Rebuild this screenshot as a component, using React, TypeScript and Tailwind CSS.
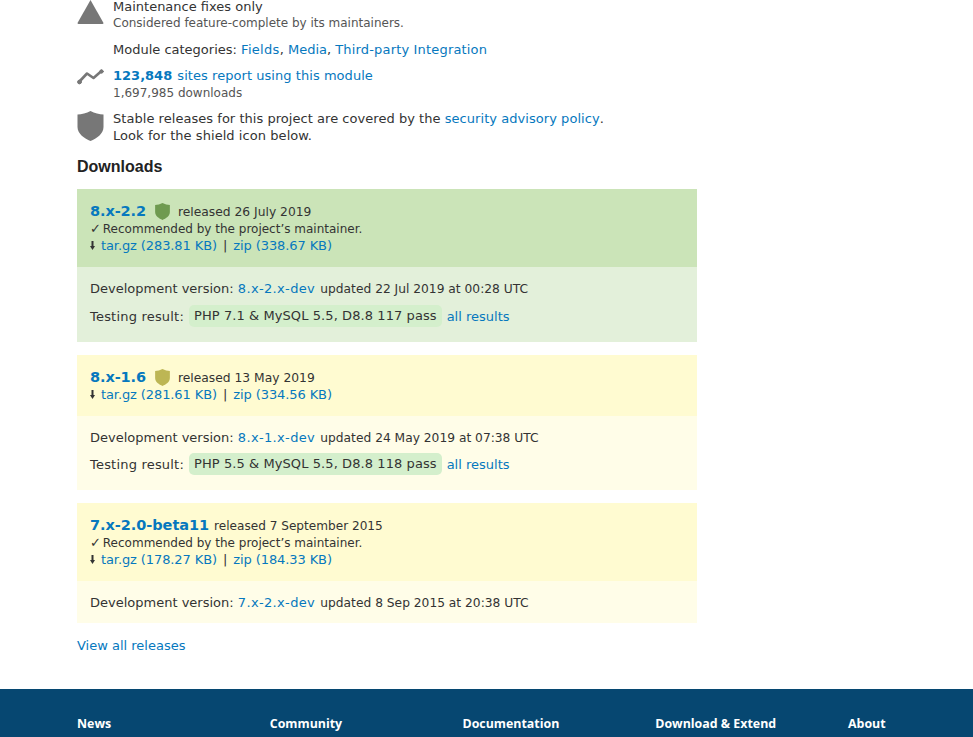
function Shield({ color, className }: { color: string; className: string }) {
  return (
    <svg viewBox="0 0 26 30" className={className} fill={color}>
      <path d="M13 0 C17 2 22 3.5 26 3.5 V16 C26 23 19 27.5 13 30 C7 27.5 0 23 0 16 V3.5 C4 3.5 9 2 13 0 Z" />
    </svg>
  );
}

function Links({ tar, zip }: { tar: string; zip: string }) {
  return (
    <div className="flex items-center tracking-[-0.1px]">
      <svg viewBox="0 0 5 9" className="w-[5px] h-[9px] mr-[6px] shrink-0" fill="#333">
        <path d="M1.5 0 H3.5 V5 H5 L2.5 9 L0 5 H1.5 Z" />
      </svg>
      <a className="text-[#0678be]">tar.gz ({tar})</a>
      <span className="whitespace-pre mx-[2px]"> | </span>
      <a className="text-[#0678be]">zip ({zip})</a>
    </div>
  );
}

function Recommended() {
  return (
    <div className="text-[12px] leading-[18px] h-[17px]">
      <span className="inline-block w-[9px] text-[13px]">✓</span> Recommended by the project’s maintainer.
    </div>
  );
}

function Title({ name, className }: { name: string; className: string }) {
  return <a className={"font-['DejaVu_Sans',sans-serif] font-bold text-[14.5px] text-[#0678be] " + className}>{name}</a>;
}

function DevVersion({ link, updated }: { link: string; updated: string }) {
  return (
    <div>
      Development version: <a className="text-[#0678be] tracking-[0.35px]">{link}</a>{' '}
      <span className="ml-[1px] text-[12.25px]">{updated}</span>
    </div>
  );
}

function Testing({ env, pass, className }: { env: string; pass: string; className: string }) {
  return (
    <div className={"flex items-center h-[24px] " + className}>
      <span className="tracking-[0.2px]">Testing result:</span>
      <span className="ml-[5px] rounded-[5px] bg-[#d4efcc] px-[5px] h-[22px] leading-[22px] tracking-[0.08px]">{env} {pass} pass</span>
      <a className="ml-[5px] text-[#0678be]">all results</a>
    </div>
  );
}

export default function App() {
  return (
    <div className="h-[737px] overflow-hidden bg-white text-[13px] leading-[17px] text-[#333] font-['DejaVu_Sans',sans-serif]">
      <div className="pl-[77px]">
        <div className="w-[620px]">
          <div className="flex -mt-[2px] h-[33px]">
            <svg viewBox="0 0 26 24" className="w-[27px] h-[24px] mt-[2px] shrink-0" fill="#777">
              <path d="M13 0 L26 23 Q26 24 25 24 H1 Q0 24 0 23 Z" />
            </svg>
            <div className="ml-[9px]">
              <div>Maintenance fixes only</div>
              <div className="text-[12px] text-[#555]">Considered feature-complete by its maintainers.</div>
            </div>
          </div>
          <div className="ml-[36px] mt-[10px]">
            Module categories: <a className="text-[#0678be] tracking-[0.3px]">Fields</a>, <a className="text-[#0678be]">Media</a>, <a className="text-[#0678be] tracking-[0.17px]">Third-party Integration</a>
          </div>
          <div className="flex mt-[9px]">
            <svg viewBox="0 0 27 16" className="w-[27px] h-[16px] mt-[2px] shrink-0" fill="#777" stroke="#777" strokeLinecap="round" strokeLinejoin="round">
              <path d="M2 13 L10 4.5 L16.5 9 L24.5 2" fill="none" strokeWidth="2.6" />
              <circle cx="2.5" cy="13" r="1.9" />
              <circle cx="24.5" cy="2.5" r="1.7" />
            </svg>
            <div className="ml-[9px]">
              <div className="h-[18px] text-[#0678be]"><b>123,848</b> <span className="tracking-[0.05px] ml-[1px]">sites report using this module</span></div>
              <div className="text-[12px] text-[#555]">1,697,985 downloads</div>
            </div>
          </div>
          <div className="flex mt-[8px]">
            <Shield color="#777" className="w-[27px] h-[30px] mt-[1px] shrink-0" />
            <div className="ml-[9px]">
              <div className="tracking-[0.04px]">Stable releases for this project are covered by the <a className="text-[#0678be] tracking-[0.05px]">security advisory policy</a>.</div>
              <div className="tracking-[0.06px]">Look for the shield icon below.</div>
            </div>
          </div>
          <h2 className="mt-[13px] font-['Liberation_Sans',sans-serif] font-bold text-[16px] leading-[20px] text-[#222]">Downloads</h2>

          <div className="mt-[12px]">
            <div className="bg-[#cbe4b8] px-[13px] pt-[13px] pb-[13px]">
              <div className="flex items-center h-[18px]">
                <Title name="8.x-2.2" className="tracking-[-0.1px]" />
                <Shield color="#6f9a50" className="w-[15px] h-[17px] ml-[9px]" />
                <span className="ml-[8px] mt-[2px] text-[12.3px]">released 26 July 2019</span>
              </div>
              <Recommended />
              <Links tar="283.81 KB" zip="338.67 KB" />
            </div>
            <div className="bg-[#e3f0da] px-[13px] pt-[13px] pb-[14px]">
              <DevVersion link="8.x-2.x-dev" updated="updated 22 Jul 2019 at 00:28 UTC" />
              <Testing env="PHP 7.1 & MySQL 5.5, D8.8" pass="117" className="mt-[6px]" />
            </div>
          </div>

          <div className="mt-[13px]">
            <div className="bg-[#fffbd1] px-[13px] pt-[13px] pb-[13px]">
              <div className="flex items-center h-[18px]">
                <Title name="8.x-1.6" className="tracking-[-0.1px]" />
                <Shield color="#bdb654" className="w-[15px] h-[17px] ml-[9px]" />
                <span className="ml-[8px] mt-[2px] text-[12.3px]">released 13 May 2019</span>
              </div>
              <Links tar="281.61 KB" zip="334.56 KB" />
            </div>
            <div className="bg-[#fffde8] px-[13px] pt-[13px] pb-[14px]">
              <DevVersion link="8.x-1.x-dev" updated="updated 24 May 2019 at 07:38 UTC" />
              <Testing env="PHP 5.5 & MySQL 5.5, D8.8" pass="118" className="mt-[5px]" />
            </div>
          </div>

          <div className="mt-[13px]">
            <div className="bg-[#fffbd1] px-[13px] pt-[13px] pb-[13px]">
              <div className="flex items-center h-[18px]">
                <Title name="7.x-2.0-beta11" className="tracking-[-0.05px]" />
                <span className="ml-[5px] mt-[2px] text-[12.1px]">released 7 September 2015</span>
              </div>
              <Recommended />
              <Links tar="178.27 KB" zip="184.33 KB" />
            </div>
            <div className="bg-[#fffde8] px-[13px] pt-[13px] pb-[11px]">
              <DevVersion link="7.x-2.x-dev" updated="updated 8 Sep 2015 at 20:38 UTC" />
            </div>
          </div>

          <div className="mt-[14px]"><a className="text-[#0678be]">View all releases</a></div>
        </div>
      </div>
      <div className="mt-[35px] bg-[#064771] h-[60px] pl-[77px] pt-[26px] flex font-['Open_Sans',sans-serif] font-bold text-[12.4px] leading-[17px] text-white">
        <div className="w-[192.75px]">News</div>
        <div className="w-[192.75px]">Community</div>
        <div className="w-[192.75px]">Documentation</div>
        <div className="w-[192.75px]">Download &amp; Extend</div>
        <div>About</div>
      </div>
    </div>
  );
}
